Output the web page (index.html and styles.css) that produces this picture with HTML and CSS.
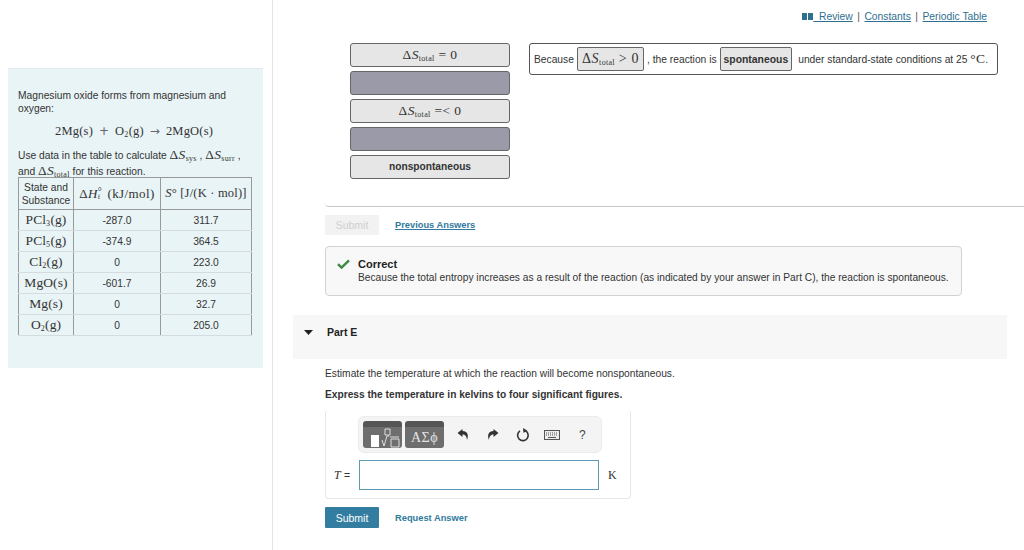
FILE: index.html
```html
<!DOCTYPE html>
<html lang="en">
<head>
<meta charset="utf-8">
<title>Part E</title>
<link rel="stylesheet" href="styles.css">
</head>
<body>
<div class="page">
  <aside class="side">
    <section class="panel">
      <p class="intro">Magnesium oxide forms from magnesium and oxygen:</p>
      <p class="equation"><span class="m">2Mg(s)</span><span class="op">+</span><span class="m">O<sub>2</sub>(g)</span><span class="op">→</span><span class="m">2MgO(s)</span></p>
      <p class="use">Use data in the table to calculate <span class="m big">Δ<i>S</i><sub>sys</sub></span> , <span class="m big">Δ<i>S</i><sub>surr</sub></span> , and <span class="m big">Δ<i>S</i><sub>total</sub></span> for this reaction.</p>
      <table class="data">
        <tr><th class="c1">State and Substance</th><th class="c2 m">Δ<i>H</i><span class="ff"><span class="ring">°</span><sub>f</sub></span> (kJ/mol)</th><th class="c3 m"><i>S</i>° [J/(K · mol)]</th></tr>
        <tr><td class="m sub">PCl<sub>3</sub>(g)</td><td>-287.0</td><td>311.7</td></tr>
        <tr><td class="m sub">PCl<sub>5</sub>(g)</td><td>-374.9</td><td>364.5</td></tr>
        <tr><td class="m sub">Cl<sub>2</sub>(g)</td><td>0</td><td>223.0</td></tr>
        <tr><td class="m sub">MgO(s)</td><td>-601.7</td><td>26.9</td></tr>
        <tr><td class="m sub">Mg(s)</td><td>0</td><td>32.7</td></tr>
        <tr><td class="m sub">O<sub>2</sub>(g)</td><td>0</td><td>205.0</td></tr>
      </table>
    </section>
  </aside>
  <main class="main">
    <nav class="links">
      <svg class="book" width="11" height="7" viewBox="0 0 11 7"><path d="M0 0h5v7H0zM6 0h5v7H6z" fill="#2f6f8f"/></svg>
      <a href="#">&nbsp;&nbsp;Review</a><span class="sep">|</span><a href="#">Constants</a><span class="sep">|</span><a href="#">Periodic Table</a>
    </nav>
    <div class="answer">
      <div class="dnd">
        <div class="tiles">
          <div class="tile m"><span class="big">Δ<i>S</i><sub>total</sub></span> = 0</div>
          <div class="tile empty"></div>
          <div class="tile m"><span class="big">Δ<i>S</i><sub>total</sub></span> =&lt; 0</div>
          <div class="tile empty"></div>
          <div class="tile bold">nonspontaneous</div>
        </div>
        <div class="target">
          <span>Because</span>
          <span class="slot m"><span class="big">Δ<i>S</i><sub>total</sub></span> &gt; 0</span>
          <span>, the reaction is</span>
          <span class="slot bold">spontaneous</span>
          <span class="tail">under standard-state conditions at 25 <span class="m big">°C</span>.</span>
        </div>
      </div>
    </div>
    <div class="actions first">
      <button class="btn off">Submit</button>
      <a class="action under" href="#">Previous Answers</a>
    </div>
    <div class="feedback">
      <svg class="check" width="13" height="10" viewBox="0 0 13 10"><path d="M1 5.200l3.600 3.400L12 1.400" fill="none" stroke="#3a8a3f" stroke-width="2.400"/></svg>
      <div>
        <div class="fb-title">Correct</div>
        <div class="fb-text">Because the total entropy increases as a result of the reaction (as indicated by your answer in Part C), the reaction is spontaneous.</div>
      </div>
    </div>
    <div class="part">
      <svg class="caret" width="9" height="5" viewBox="0 0 9 5"><path d="M0 0h9L4.500 5z" fill="#222"/></svg>
      <span>Part E</span>
    </div>
    <p class="q">Estimate the temperature at which the reaction will become nonspontaneous.</p>
    <p class="q strong">Express the temperature in kelvins to four significant figures.</p>
    <div class="editor">
      <div class="toolbar">
        <div class="tool tmpl">
          <svg width="39" height="21" viewBox="0 0 39 21"><rect x="8" y="8" width="8" height="12" fill="#fff"/><path d="M22 2h5v6h-5zM19 13l2 6 3-10h2M27 10h9M28 12h8v8h-8z" fill="none" stroke="#ddd" stroke-width="1"/></svg>
        </div>
        <div class="tool sym">ΑΣϕ</div>
        <svg class="ico undo" width="12" height="13" viewBox="0 0 12 13"><path d="M5.500 1L.5 5l5 4V6.500c2.500 0 4.200 1.500 4.500 5.500 2-5 .5-9-4.500-9z" fill="#333"/></svg>
        <svg class="ico redo" width="12" height="13" viewBox="0 0 12 13"><path d="M6.500 1l5 4-5 4V6.500C4 6.500 2.300 8 2 12 0 7 1.500 3 6.500 3z" fill="#333"/></svg>
        <svg class="ico reset" width="14" height="14" viewBox="0 0 14 14"><path d="M8.500 2.300A5.300 5.300 0 1 1 4 2.900" fill="none" stroke="#333" stroke-width="1.600"/><path d="M7 0l4 2.500L7.500 5z" fill="#333"/></svg>
        <svg class="ico keys" width="16" height="10" viewBox="0 0 16 10"><rect x=".5" y=".5" width="15" height="9" fill="#eee" stroke="#555"/><path d="M2 3h12M2 5h12" stroke="#555" stroke-dasharray="1 1"/><path d="M4 7.500h8" stroke="#555"/></svg>
        <span class="help">?</span>
      </div>
      <div class="input-row">
        <span class="var"><i class="m">T</i> =</span>
        <div class="input"></div>
        <span class="m unit">K</span>
      </div>
    </div>
    <div class="actions">
      <button class="btn on">Submit</button>
      <a class="action" href="#">Request Answer</a>
    </div>
  </main>
</div>
</body>
</html>
```
FILE: styles.css
```css
* { box-sizing: border-box; }
html, body { margin: 0; height: 550px; overflow: hidden; background: #fff; }
body { font-family: "Liberation Sans", Arial, sans-serif; font-size: 10.25px; color: #333; }
p { margin: 0; }
sub { line-height: 0; font-size: 8px; vertical-align: -2px; letter-spacing: .3px; }
.m { font-family: "Liberation Serif", "Times New Roman", serif; letter-spacing: .3px; }
.page { display: flex; height: 550px; }
.side { width: 273px; flex: none; border-right: 1px solid #dfe6ea; padding: 68px 9px 0 8px; }
.panel { background: #e9f4f6; border-top: 1px solid #e2ebee; height: 300px; padding: 20px 10px 0 10px; }
.intro { line-height: 13px; }
.equation { font-size: 12.5px; line-height: 16px; margin: 8px 0 9px; padding-left: 37px; display: flex; align-items: center; }
.equation .m { letter-spacing: .2px; }
.equation .op { margin: 0 6px; font-size: 12px; color: #666; font-family: "DejaVu Sans", sans-serif; }
.use { line-height: 16px; height: 29px; }
.use .big { font-size: 13.5px; line-height: 0; }
.data { border-collapse: collapse; width: 233px; table-layout: fixed; }
.data td, .data th { border-left: 1px solid #999; border-right: 1px solid #999; border-bottom: 1px solid #d4dcdf; padding: 0; text-align: center; font-weight: 400; height: 21px; }
.data th { border-top: 1px solid #999; height: 32px; line-height: 13px; font-size: 10.25px; }
.data tr:first-child th { border-bottom: 1px solid #999; }
.data th.m { font-size: 13px; letter-spacing: .4px; white-space: nowrap; }
.data th.c3 { font-size: 12.5px; letter-spacing: .2px; }
.data .c1 { width: 55px; }
.data .c2 { width: 87px; }
.data .c3 { width: 91px; }
.data td.sub { font-size: 13.5px; line-height: 14px; letter-spacing: .1px; }
.ff { display: inline-block; width: 6px; position: relative; height: 10px; }
.ring { position: absolute; left: 0; top: -3px; font-size: 10px; }
.ff sub { position: absolute; left: 0; top: 9px; font-size: 7px; }
.main { flex: 1; min-width: 0; padding: 0 17px 0 20px; }
.links { height: 33px; padding: 10px 20px 0 0; display: flex; justify-content: flex-end; align-items: flex-start; line-height: 13px; font-size: 10.3px; }
.links a { color: #2f6f8f; text-decoration: underline; }
.book { margin-top: 3px; }
.sep { margin: 0 4.5px; color: #555; }
.answer { margin-left: 32px; margin-right: -17px; height: 174px; padding: 10px 0 0 25px; border-bottom: 1px solid #c8c8c8; border-bottom-left-radius: 4px; }
.dnd { display: flex; gap: 19px; align-items: flex-start; }
.tiles { width: 160px; flex: none; display: flex; flex-direction: column; gap: 4px; }
.tile { height: 24px; border: 1px solid #666; border-radius: 3px; background: #e6e6e6; display: flex; align-items: center; justify-content: center; font-size: 13.5px; gap: 4px; letter-spacing: .4px; }
.tile.empty { background: #9a9aa8; }
.tile.bold { font-family: "Liberation Sans", Arial, sans-serif; font-weight: 700; font-size: 10.2px; letter-spacing: 0; padding-bottom: 1px; }
.target { width: 469px; height: 32px; border: 1px solid #555; border-radius: 3px; display: flex; align-items: center; padding-left: 4px; gap: 3px; white-space: nowrap; }
.slot { height: 24px; padding: 0 4px; border: 1px solid #666; border-radius: 2px; background: #e6e6e6; display: inline-flex; align-items: center; gap: 4px; font-size: 14px; letter-spacing: .6px; }
.slot.bold { font-family: "Liberation Sans", Arial, sans-serif; font-weight: 700; font-size: 10.4px; letter-spacing: 0; padding: 0 3px; }
.tail { margin-left: 3px; }
.tail .big { font-size: 13.5px; }
.actions { margin-left: 32px; height: 21px; display: flex; align-items: center; gap: 16px; }
.actions.first { margin-top: 8px; height: 20px; }
.btn { width: 54px; height: 100%; border: 0; border-radius: 1px; font: 10.5px "Liberation Sans", Arial, sans-serif; padding: 0; }
.btn.off { background: #f2f2f2; color: #cfcfcf; }
.btn.on { background: #337ea0; color: #fff; }
.action { font-weight: 700; font-size: 9.3px; color: #2f7a9c; text-decoration: none; }
.action.under { text-decoration: underline; }
.feedback { margin: 11px 0 0 32px; width: 637px; height: 50px; border: 1px solid #d2d2d2; border-radius: 4px; background: #f8f8f8; display: flex; padding: 11px 0 0 11px; gap: 8px; }
.check { margin-top: 1px; }
.fb-title { font-weight: 700; font-size: 11px; line-height: 13px; color: #222; }
.fb-text { font-size: 10.2px; line-height: 13px; white-space: nowrap; }
.part { margin-top: 19px; width: 714px; height: 44px; background: #f7f7f7; display: flex; align-items: center; font-weight: 700; font-size: 10.5px; color: #222; padding: 0 0 10px 11px; gap: 14px; }
.q { margin: 8px 0 0 32px; line-height: 13px; }
.q.strong { font-weight: 700; font-size: 10.2px; }
.editor { margin: 9px 0 8px 32px; width: 306px; height: 89px; border: 1px solid #e6e6e6; border-top-color: transparent; border-radius: 4px; padding: 5px 0 0 32px; }
.toolbar { width: 244px; height: 37px; background: #f4f4f4; border-radius: 6px; border: 1px solid #ececec; display: flex; align-items: center; padding-left: 4px; }
.tool { width: 39px; height: 27px; border-radius: 3px; border-top: 6px solid #555; background: #6e6e6e; color: #e4e4e4; display: flex; align-items: flex-end; justify-content: center; overflow: hidden; flex: none; }
.tool.sym { margin-left: 3px; font: 14px "Liberation Serif", serif; letter-spacing: .5px; align-items: center; }
.ico { flex: none; }
.undo { margin-left: 13px; }
.redo { margin-left: 18px; }
.reset { margin-left: 17px; }
.keys { margin-left: 14px; }
.help { margin-left: 19px; font-size: 12px; color: #444; }
.input-row { display: flex; align-items: center; margin: 7px 0 0 -24px; }
.var { width: 25px; font-size: 10.5px; }
.var .m { font-size: 12px; }
.input { width: 240px; height: 30px; border: 1px solid #5e9ab5; background: #fff; }
.unit { margin-left: 9px; font-size: 12px; }
```
